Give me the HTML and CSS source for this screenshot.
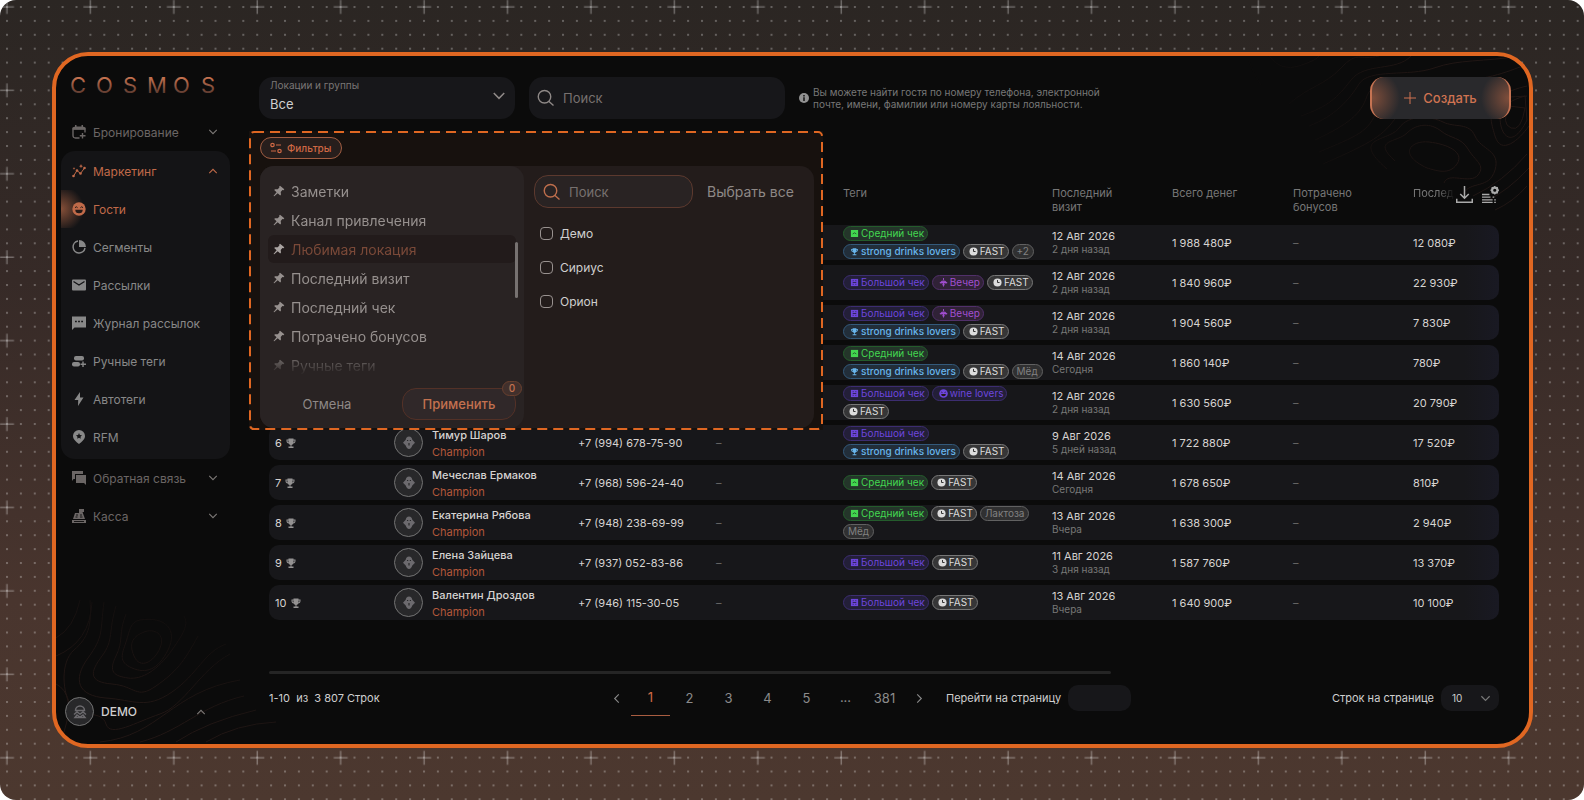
FILE: index.html
```html
<!DOCTYPE html>
<html lang="ru">

<head>
	<meta charset="utf-8">
	<title>COSMOS</title>
	<meta name="viewport" content="width=device-width, initial-scale=1">
	<link rel="stylesheet" href="styles.css">
</head>

<body>
	<!-- icon sprite -->
	<svg class="sprite" aria-hidden="true">
		<symbol id="i-down" viewBox="0 0 12 12"><path d="M1.5 3.5 6 8l4.500-4.500" fill="none" stroke="currentColor" stroke-width="1.300"/></symbol>
		<symbol id="i-up" viewBox="0 0 12 12"><path d="M1.500 8.500 6 4l4.500 4.500" fill="none" stroke="currentColor" stroke-width="1.300"/></symbol>
		<symbol id="i-search" viewBox="0 0 18 18"><path d="M7.500 1.500a6 6 0 1 1 0 12.500a6.200 6.200 0 1 1 0-12.500zM12 12.500l4.500 4" fill="none" stroke="currentColor" stroke-width="1.400"/></symbol>
		<symbol id="i-pin" viewBox="0 0 12 12"><path d="M7 .8 11.300 4.300 10.500 5.200 9.400 5 7.700 7 8 9.500 7.200 10.400 4.700 8.200 1.300 11.300.500 11 3.600 7.200 1.200 5 2 4.200 4.700 4.200 6.400 2.500 6.200 1.500z" fill="currentColor"/></symbol>
		<symbol id="i-cup" viewBox="0 0 24 24"><path d="M19 5h-2V3H7v2H3v3c0 2.550 1.920 4.630 4.390 4.940.630 1.500 1.980 2.630 3.610 2.960V19H7v3h10v-3h-4v-3.100c1.630-.330 2.980-1.460 3.610-2.960C19.080 12.630 21 10.550 21 8V5zM5 8V7h2v3.820C5.840 10.400 5 9.300 5 8zm14 0c0 1.300-.840 2.400-2 2.820V7h2z" fill="currentColor"/></symbol>
		<symbol id="i-clock" viewBox="0 0 10 10"><circle cx="5" cy="5" r="4.500" fill="currentColor"/><path d="M5 2.200V5h2.300" fill="none" stroke="#333" stroke-width="1.100"/></symbol>
		<symbol id="i-check" viewBox="0 0 10 10"><path d="M1 1h8v8H1z" fill="currentColor"/><path d="M3 5.500q2-2.500 4 0" fill="none" stroke="#1d4a24" stroke-width=".9"/></symbol>
		<symbol id="i-big" viewBox="0 0 10 10"><path d="M1 1h8v8H1z" fill="currentColor"/><path d="M3 3h1M6 3h1M3 5h4M3 7h1M6 7h1" stroke="#2a2148" stroke-width="1"/></symbol>
		<symbol id="i-lamp" viewBox="0 0 10 10"><path d="M5 0v2.500M1 5.500h8L7 3.500H3zM5 5v4.500M3.500 7.500h3" fill="currentColor" stroke="currentColor" stroke-width="1"/></symbol>
		<symbol id="i-smile" viewBox="0 0 14 14"><circle cx="7" cy="7" r="6.700" fill="currentColor"/><path d="M3 5.700q1.300-1.800 2.600 0M8.400 5.700q1.300-1.800 2.600 0" fill="none" stroke="#241a18" stroke-width="1"/><path d="M3.300 7.800h7.400a3.700 3.500 0 0 1-7.400 0z" fill="#241a18"/></symbol>
		<symbol id="i-face" viewBox="0 0 16 16"><path d="M8 1.500c2 0 3 1.300 3.300 3.200l2.700 3-2.700 2.800C10.500 12.500 9.500 14 8 14s-2.500-1.500-3.300-3.500L2 7.700l2.700-3C5 2.800 6 1.500 8 1.500z" fill="currentColor"/><path d="M6 5.500h1.200M8.800 5.500H10M8 8v2.500" stroke="#28282a" stroke-width="1.200"/></symbol>
		<symbol id="i-chevl" viewBox="0 0 12 12"><path d="M8.500 1.500 4 6l4.500 4.500" fill="none" stroke="currentColor" stroke-width="1.200"/></symbol>
		<symbol id="i-chevr" viewBox="0 0 12 12"><path d="M3.500 1.500 8 6l-4.500 4.500" fill="none" stroke="currentColor" stroke-width="1.200"/></symbol>
	</svg>

	<div class="stage">
		<svg class="stage__grid" viewBox="0 0 1584 800" preserveAspectRatio="xMidYMid slice" aria-hidden="true">
			<defs>
				<pattern id="dots" x="6" y="6" width="13.900" height="13.900" patternUnits="userSpaceOnUse">
					<rect width="2" height="2" fill="#fff" opacity=".27"/>
				</pattern>
				<pattern id="crosses" x="-35" y="-35" width="83.430" height="83.430" patternUnits="userSpaceOnUse">
					<path d="M35 42h14M42 35v14" stroke="#fff" stroke-width="1.500" opacity=".3"/>
				</pattern>
			</defs>
			<rect width="1584" height="800" fill="url(#dots)"/>
			<rect width="1584" height="800" fill="url(#crosses)"/>
		</svg>

		<div class="frame">
			<!-- topographic lines in two corners -->
			<svg class="contour contour--top" viewBox="0 0 290 160" fill="none" aria-hidden="true">
				<g stroke="#211715">
					<path d="M30 0q12 16 30 10T80 0M10 5q5 15 12 24M50 48C70 30 85 30 102 12S120 5 140 0M62 60C90 50 98 42 112 24s45-8 60-24" />
					<path d="M70 70C96 60 110 44 120 28s50-7 75-16 50-6 86-12M76 84c34-16 46-26 52-44s44-18 80-16 60-8 78-15" />
					<path d="M80 96c38-16 50-20 58-42M84 108c50-22 60-28 74-48s70-16 130-20" />
					<path d="M148 113C110 80 150 86 160 72s32-12 44-6 26 0 32 14 26 14 20 34-24 10-32 24" />
					<path d="M156 105c-24-22 2-18 12-28s24-10 34-2 20 6 27 18 18 16 10 26-30-4-34 8" />
					<path d="M188 112c-30-14-16-28 2-26s36 10 28 22-22 6-30 4z" />
					<path d="M286 40c-28 8-26 20-24 30s12 22 26-6zM288 30c-44 10-38 30-32 50s24 4 34-10M270 50q-8 18 2 22t14-20z" />
					<path d="M234 140q30-14 54-42M246 146q24-12 44-34M256 154q18-8 32-24" />
				</g>
			</svg>
			<svg class="contour contour--bottom" viewBox="0 0 240 150" fill="none" aria-hidden="true">
				<g stroke="#211715">
					<path d="M88 38c10-4 22 2 16 16s-20 22-26 8 0-20 10-24z"/>
					<path d="M84 26c26-4 38 10 28 30S90 80 76 74 66 60 70 48s4-20 14-22z"/>
					<path d="M70 20c-8 20-2 26-10 42s-2 20 12 22 30-8 44-28 16-26 12-34"/>
					<path d="M60 12c-8 26-2 34-14 50s-14 26 10 28 24 16 44 2 28-24 42-50"/>
					<path d="M48 8c-4 30 0 34-16 56s-10 38 18 40 40 12 66-6 32-40 54-48"/>
					<path d="M34 6c2 26-2 38-16 50S6 100 16 112s30 4 34 18 30-2 54-10 40-44 70-60"/>
					<path d="M0 44q18-10 24-38M0 62q34-14 36-54M0 90q20 10 8 48M44 148c60-6 70-50 140-62M84 148c40-10 60-36 104-46M120 148q30-20 80-32M150 148q30-18 70-20"/>
				</g>
			</svg>

			<aside class="sidebar">
				<svg class="logo" viewBox="0 0 146 18" role="img" aria-label="COSMOS">
					<defs>
						<linearGradient id="copper" x1="0" y1="0" x2="0" y2="1">
							<stop offset=".2" stop-color="#c77350"/>
							<stop offset="1" stop-color="#402b27"/>
						</linearGradient>
					</defs>
					<text x="-1 25 52 76 102 130" y="17" fill="url(#copper)">COSMOS</text>
				</svg>

				<nav class="nav">
					<button class="nav__item nav__item--top" type="button">
						<svg viewBox="0 0 14 14"><path d="M7.500 13H3.500Q1 13 1 10.500V4h12v3.500M10.500 8v5.500M7.800 10.700h5.700" fill="none" stroke="currentColor" stroke-width="1.400"/><path d="M.500 4.500v-2L3 1.500h8l2.500 1v2zM3 0h1.500v2H3zM9.500 0H11v2H9.500z" fill="currentColor"/></svg>
						<span>Бронирование</span>
						<svg class="nav__arrow"><use href="#i-down"/></svg>
					</button>
					<div class="nav__group">
						<button class="nav__item nav__item--on" type="button">
							<svg viewBox="0 0 14 14" fill="currentColor"><path d="M1.500 12 5 6.500l3.500 3L12.500 4" fill="none" stroke="currentColor"/><circle cx="1.500" cy="12" r="1.300"/><circle cx="5" cy="6.500" r="1.300"/><circle cx="8.500" cy="9.500" r="1.300"/><circle cx="12.500" cy="4" r="1.300"/><path d="m9 0 .6 1.600L11 2.200l-1.400.6L9 4.200l-.6-1.400L7 2.200l1.400-.6zM2 3l.4 1 1 .4-1 .4L2 6l-.4-1.200-1-.4 1-.4z"/></svg>
							<span>Маркетинг</span>
							<svg class="nav__arrow"><use href="#i-up"/></svg>
						</button>
						<a class="nav__item nav__item--on nav__item--current" href="#guests">
							<svg><use href="#i-smile"/></svg>
							<span>Гости</span>
						</a>
						<a class="nav__item" href="#segments">
							<svg viewBox="0 0 14 14"><path d="M6 1a6 6 0 1 0 7 7" fill="none" stroke="currentColor" stroke-width="1.500"/><path d="M7 0a7 7 0 0 1 7 7H7z" fill="currentColor"/></svg>
							<span>Сегменты</span>
						</a>
						<a class="nav__item" href="#mailings">
							<svg viewBox="0 0 14 14"><rect y="1.500" width="14" height="11" rx="1" fill="currentColor"/><path d="m1.500 3.500 5.500 3.500 5.500-3.500" fill="none" stroke="#151517" stroke-width="1.300"/></svg>
							<span>Рассылки</span>
						</a>
						<a class="nav__item" href="#log">
							<svg viewBox="0 0 14 14"><path d="M0 .5h14v11H2.500L0 14z" fill="currentColor"/><path d="M3 5.500h1.800M6.100 5.500h1.800M9.200 5.500H11" stroke="#151517" stroke-width="1.600"/></svg>
							<span>Журнал рассылок</span>
						</a>
						<a class="nav__item" href="#tags">
							<svg viewBox="0 0 14 14"><rect x="2" y="2" width="10" height="4.500" rx="2" fill="currentColor"/><rect y="8" width="8" height="4.500" rx="2" fill="currentColor"/><path d="M11 7.500V13M8.500 10.200h5.500" stroke="currentColor" stroke-width="1.400"/></svg>
							<span>Ручные теги</span>
						</a>
						<a class="nav__item" href="#autotags">
							<svg viewBox="0 0 14 14"><path d="M8 0 2.500 8h3.700L6 14l5.500-8.500H8z" fill="currentColor"/></svg>
							<span>Автотеги</span>
						</a>
						<a class="nav__item" href="#rfm">
							<svg viewBox="0 0 14 14"><path d="M7 0a6 6 0 0 1 6 6c0 3.500-3.500 6-6 8-2.500-2-6-4.500-6-8a6 6 0 0 1 6-6z" fill="currentColor"/><path d="m7 3 .9 1.900 2.100.3-1.500 1.500.3 2.100L7 7.800l-1.800 1 .3-2.100L4 5.200l2.100-.3z" fill="#151517"/></svg>
							<span>RFM</span>
						</a>
					</div>
					<button class="nav__item nav__item--top" type="button">
						<svg viewBox="0 0 14 14" fill="currentColor"><path d="M0 0h11v3H3v5H1.500L0 10z"/><path d="M4 4h10v10l-2-2H4z"/></svg>
						<span>Обратная связь</span>
						<svg class="nav__arrow"><use href="#i-down"/></svg>
					</button>
					<button class="nav__item nav__item--top" type="button">
						<svg viewBox="0 0 14 14"><path d="M7 0h5v3h-1.500l2.500 7H1l2-6h4V2.500H7zM0 11h14v3H0z" fill="currentColor"/><path d="M4 6h2M8 6h2M3.500 8h2M8 8h2.500M2 12.500h10" stroke="#0b0b0b" stroke-width=".9"/></svg>
						<span>Касса</span>
						<svg class="nav__arrow"><use href="#i-down"/></svg>
					</button>
				</nav>

				<button class="user" type="button">
					<span class="avatar"><svg viewBox="0 0 16 16" fill="none" stroke="currentColor" stroke-width="1.500"><path d="M3.500 6.500a4.500 4.500 0 0 1 9 0zM2 10.500 5 8l3 2 3-2 3 2.500M3 13.500l2-2.500 3 2 3-2 2 2.500z"/></svg></span>
					<span class="user__name">DEMO</span>
					<svg class="nav__arrow"><use href="#i-up"/></svg>
				</button>
			</aside>

			<main class="main">
				<header class="topbar">
					<div class="field field--select">
						<label for="location">Локации и группы</label>
						<select id="location"><option>Все</option></select>
						<svg><use href="#i-down"/></svg>
					</div>
					<div class="field field--search">
						<svg><use href="#i-search"/></svg>
						<input type="text" placeholder="Поиск" aria-label="Поиск">
					</div>
					<div class="hint">
						<svg viewBox="0 0 10 10"><circle cx="5" cy="5" r="5" fill="currentColor"/><path d="M5 2v1.500M5 4.300V8" stroke="#0b0b0b" stroke-width="1.400"/></svg>
						<p>Вы можете найти гостя по номеру телефона, электронной<br>почте, имени, фамилии или номеру карты лояльности.</p>
					</div>
					<button class="create" type="button">
						<svg viewBox="0 0 12 12"><path d="M6 0v12M0 6h12" stroke="currentColor"/></svg>
						<span>Создать</span>
					</button>
				</header>

				<section class="filters">
					<svg class="filters__outline" aria-hidden="true"><rect x="1" y="1" rx="4"/></svg>
					<button class="chip" type="button">
						<svg viewBox="0 0 12 12" fill="none" stroke="currentColor" stroke-width="1.200"><circle cx="2.500" cy="3" r="1.700"/><circle cx="9.500" cy="9" r="1.700"/><path d="M6 3h5M1 9h5"/></svg>
						Фильтры
					</button>
					<div class="popup">
						<div class="popup__left">
							<ul class="picks">
								<li><button type="button"><svg><use href="#i-pin"/></svg>Заметки</button></li>
								<li><button type="button"><svg><use href="#i-pin"/></svg>Канал привлечения</button></li>
								<li><button class="is-on" type="button"><svg><use href="#i-pin"/></svg>Любимая локация</button></li>
								<li><button type="button"><svg><use href="#i-pin"/></svg>Последний визит</button></li>
								<li><button type="button"><svg><use href="#i-pin"/></svg>Последний чек</button></li>
								<li><button type="button"><svg><use href="#i-pin"/></svg>Потрачено бонусов</button></li>
								<li><button type="button"><svg><use href="#i-pin"/></svg>Ручные теги</button></li>
							</ul>
							<div class="popup__thumb"></div>
							<div class="popup__actions">
								<button class="cancel" type="button">Отмена</button>
								<button class="apply" type="button">Применить<span class="apply__badge">0</span></button>
							</div>
						</div>
						<div class="popup__right">
							<div class="popup__head">
								<div class="field field--small">
									<svg><use href="#i-search"/></svg>
									<input type="text" placeholder="Поиск" aria-label="Поиск локации">
								</div>
								<button class="all" type="button">Выбрать все</button>
							</div>
							<label class="check"><input type="checkbox">Демо</label>
							<label class="check"><input type="checkbox">Сириус</label>
							<label class="check"><input type="checkbox">Орион</label>
						</div>
					</div>
				</section>

				<div class="content">
					<table class="guests">
						<colgroup>
							<col class="c-rank"><col class="c-avatar"><col class="c-name"><col class="c-phone"><col class="c-card"><col class="c-tags"><col class="c-visit"><col class="c-total"><col class="c-bonus"><col>
						</colgroup>
						<thead>
							<tr>
								<td colspan="5"></td>
								<th>Теги</th>
								<th>Последний<br>визит</th>
								<th>Всего денег</th>
								<th>Потрачено<br>бонусов</th>
								<th>
									<div class="tools">
										<span class="tools__label">Послед</span>
										<button type="button" aria-label="Скачать"><svg viewBox="0 0 16 16" fill="none" stroke="currentColor" stroke-width="1.400"><path d="M8 0v11.500M4 7.500l4 4 4-4M.700 12v3.200h14.600V12"/></svg></button>
										<button type="button" aria-label="Настроить столбцы"><svg viewBox="0 0 16 16" fill="none" stroke="currentColor"><path d="M0 8h7M0 10.500h8M0 13h10M0 15.500h10M10 10.500h1.500M11.500 13H13M11.500 15.500H13" stroke-width="1.200"/><circle cx="12" cy="4" r="2.500" stroke-width="2"/><path d="M12 0v8M8 4h8M9.200 1.200l5.600 5.600M14.800 1.200 9.200 6.800" stroke-width="1.200" stroke-dasharray="1.200 5.500"/></svg></button>
									</div>
								</th>
							</tr>
						</thead>
						<tbody>
							<tr>
								<td colspan="5"></td>
								<td><div class="tags"><span class="tag tag--green"><svg><use href="#i-check"/></svg>Средний чек</span><span class="tag tag--blue"><svg><use href="#i-cup"/></svg>strong drinks lovers</span><span class="tag tag--fast"><svg><use href="#i-clock"/></svg>FAST</span><span class="tag tag--plain">+2</span></div></td>
								<td>12 Авг 2026<small>2 дня назад</small></td>
								<td>1 988 480₽</td>
								<td class="none">–</td>
								<td>12 080₽</td>
							</tr>
							<tr>
								<td colspan="5"></td>
								<td><div class="tags"><span class="tag tag--violet"><svg><use href="#i-big"/></svg>Большой чек</span><span class="tag tag--purple"><svg><use href="#i-lamp"/></svg>Вечер</span><span class="tag tag--fast"><svg><use href="#i-clock"/></svg>FAST</span></div></td>
								<td>12 Авг 2026<small>2 дня назад</small></td>
								<td>1 840 960₽</td>
								<td class="none">–</td>
								<td>22 930₽</td>
							</tr>
							<tr>
								<td colspan="5"></td>
								<td><div class="tags"><span class="tag tag--violet"><svg><use href="#i-big"/></svg>Большой чек</span><span class="tag tag--purple"><svg><use href="#i-lamp"/></svg>Вечер</span><span class="tag tag--blue"><svg><use href="#i-cup"/></svg>strong drinks lovers</span><span class="tag tag--fast"><svg><use href="#i-clock"/></svg>FAST</span></div></td>
								<td>12 Авг 2026<small>2 дня назад</small></td>
								<td>1 904 560₽</td>
								<td class="none">–</td>
								<td>7 830₽</td>
							</tr>
							<tr>
								<td colspan="5"></td>
								<td><div class="tags"><span class="tag tag--green"><svg><use href="#i-check"/></svg>Средний чек</span><span class="tag tag--blue"><svg><use href="#i-cup"/></svg>strong drinks lovers</span><span class="tag tag--fast"><svg><use href="#i-clock"/></svg>FAST</span><span class="tag tag--plain">Мёд</span></div></td>
								<td>14 Авг 2026<small>Сегодня</small></td>
								<td>1 860 140₽</td>
								<td class="none">–</td>
								<td>780₽</td>
							</tr>
							<tr>
								<td colspan="5"></td>
								<td><div class="tags"><span class="tag tag--violet"><svg><use href="#i-big"/></svg>Большой чек</span><span class="tag tag--violet"><svg><use href="#i-smile"/></svg>wine lovers</span><span class="tag tag--fast"><svg><use href="#i-clock"/></svg>FAST</span></div></td>
								<td>12 Авг 2026<small>2 дня назад</small></td>
								<td>1 630 560₽</td>
								<td class="none">–</td>
								<td>20 790₽</td>
							</tr>
							<tr>
								<td class="rank">6 <svg><use href="#i-cup"/></svg></td>
								<td><span class="avatar"><svg><use href="#i-face"/></svg></span></td>
								<td class="name">Тимур Шаров<small>Champion</small></td>
								<td>+7 (994) 678-75-90</td>
								<td class="none">–</td>
								<td><div class="tags"><span class="tag tag--violet"><svg><use href="#i-big"/></svg>Большой чек</span><span class="tag tag--blue"><svg><use href="#i-cup"/></svg>strong drinks lovers</span><span class="tag tag--fast"><svg><use href="#i-clock"/></svg>FAST</span></div></td>
								<td>9 Авг 2026<small>5 дней назад</small></td>
								<td>1 722 880₽</td>
								<td class="none">–</td>
								<td>17 520₽</td>
							</tr>
							<tr>
								<td class="rank">7 <svg><use href="#i-cup"/></svg></td>
								<td><span class="avatar"><svg><use href="#i-face"/></svg></span></td>
								<td class="name">Мечеслав Ермаков<small>Champion</small></td>
								<td>+7 (968) 596-24-40</td>
								<td class="none">–</td>
								<td><div class="tags"><span class="tag tag--green"><svg><use href="#i-check"/></svg>Средний чек</span><span class="tag tag--fast"><svg><use href="#i-clock"/></svg>FAST</span></div></td>
								<td>14 Авг 2026<small>Сегодня</small></td>
								<td>1 678 650₽</td>
								<td class="none">–</td>
								<td>810₽</td>
							</tr>
							<tr>
								<td class="rank">8 <svg><use href="#i-cup"/></svg></td>
								<td><span class="avatar"><svg><use href="#i-face"/></svg></span></td>
								<td class="name">Екатерина Рябова<small>Champion</small></td>
								<td>+7 (948) 238-69-99</td>
								<td class="none">–</td>
								<td><div class="tags"><span class="tag tag--green"><svg><use href="#i-check"/></svg>Средний чек</span><span class="tag tag--fast"><svg><use href="#i-clock"/></svg>FAST</span><span class="tag tag--plain">Лактоза</span><span class="tag tag--plain">Мёд</span></div></td>
								<td>13 Авг 2026<small>Вчера</small></td>
								<td>1 638 300₽</td>
								<td class="none">–</td>
								<td>2 940₽</td>
							</tr>
							<tr>
								<td class="rank">9 <svg><use href="#i-cup"/></svg></td>
								<td><span class="avatar"><svg><use href="#i-face"/></svg></span></td>
								<td class="name">Елена Зайцева<small>Champion</small></td>
								<td>+7 (937) 052-83-86</td>
								<td class="none">–</td>
								<td><div class="tags"><span class="tag tag--violet"><svg><use href="#i-big"/></svg>Большой чек</span><span class="tag tag--fast"><svg><use href="#i-clock"/></svg>FAST</span></div></td>
								<td>11 Авг 2026<small>3 дня назад</small></td>
								<td>1 587 760₽</td>
								<td class="none">–</td>
								<td>13 370₽</td>
							</tr>
							<tr>
								<td class="rank">10 <svg><use href="#i-cup"/></svg></td>
								<td><span class="avatar"><svg><use href="#i-face"/></svg></span></td>
								<td class="name">Валентин Дроздов<small>Champion</small></td>
								<td>+7 (946) 115-30-05</td>
								<td class="none">–</td>
								<td><div class="tags"><span class="tag tag--violet"><svg><use href="#i-big"/></svg>Большой чек</span><span class="tag tag--fast"><svg><use href="#i-clock"/></svg>FAST</span></div></td>
								<td>13 Авг 2026<small>Вчера</small></td>
								<td>1 640 900₽</td>
								<td class="none">–</td>
								<td>10 100₽</td>
							</tr>
						</tbody>
					</table>

					<div class="hscroll"></div>

					<footer class="pager">
						<p class="pager__count">1-10 &nbsp;из &nbsp;3 807 Строк</p>
						<div class="pager__pages">
							<button class="pager__step" type="button" aria-label="Назад"><svg><use href="#i-chevl"/></svg></button>
							<button class="is-on" type="button">1</button>
							<button type="button">2</button>
							<button type="button">3</button>
							<button type="button">4</button>
							<button type="button">5</button>
							<span>...</span>
							<button type="button">381</button>
							<button class="pager__step" type="button" aria-label="Вперёд"><svg><use href="#i-chevr"/></svg></button>
						</div>
						<label for="goto">Перейти на страницу</label>
						<input id="goto" class="pager__box pager__box--input" type="text">
						<label class="pager__rows" for="rows">Строк на странице</label>
						<div class="pager__box">
							<select id="rows"><option>10</option></select>
							<svg><use href="#i-down"/></svg>
						</div>
					</footer>
				</div>
			</main>
		</div>
	</div>
</body>

</html>
```

FILE: styles.css
```css
* {
	box-sizing: border-box;
}

html,
body {
	margin: 0;
	padding: 0;
	background: #fff;
	font-family: Inter, 'Noto Sans', sans-serif;
	font-size: 12px;
	color: #cfcfcf;
}

p,
ul {
	margin: 0;
	padding: 0;
	list-style: none;
}

button,
input,
select {
	margin: 0;
	padding: 0;
	border: 0;
	background: none;
	color: inherit;
	font: inherit;
	appearance: none;
	outline: none;
}

input::placeholder {
	color: #77716f;
	opacity: 1;
}

a {
	color: inherit;
	text-decoration: none;
}

svg {
	display: block;
	flex: none;
}

.sprite {
	position: absolute;
	width: 0;
	height: 0;
}

/* backdrop */

.stage {
	position: relative;
	min-height: 100vh;
	padding: 52px 51px 52px 52px;
	border-radius: 16px;
	overflow: hidden;
	background: linear-gradient(#2b2623, #362a27 35%, #49352e 75%, #4c382f);
}

.stage__grid {
	position: absolute;
	top: 0;
	left: 0;
	width: 100%;
	height: 100%;
}

.frame {
	position: relative;
	display: flex;
	min-height: calc(100vh - 104px);
	border: 4px solid #e06722;
	border-radius: 36px;
	background: #0b0b0b;
	overflow: hidden;
}

.contour {
	position: absolute;
}

.contour--top {
	top: 0;
	right: 0;
	width: 290px;
	height: 160px;
	mask-image: linear-gradient(250deg, #000 30%, transparent 85%);
}

.contour--bottom {
	bottom: 0;
	left: 0;
	width: 240px;
	height: 150px;
	mask-image: linear-gradient(20deg, #000 30%, transparent 90%);
}

/* sidebar */

.sidebar {
	position: relative;
	display: flex;
	flex-direction: column;
	flex: none;
	width: 174px;
	padding: 20px 0 18px 5px;
}

.logo {
	width: 146px;
	height: 18px;
	margin-left: 10px;
	overflow: visible;
	font-size: 22px;
	font-weight: 400;
}

.nav {
	margin-top: 19px;
}

.nav__group {
	padding: 1px 0 3px;
	border-radius: 14px;
	background: #141416;
	overflow: hidden;
}

.nav__item {
	display: flex;
	align-items: center;
	gap: 7px;
	width: 100%;
	height: 38px;
	padding: 0 12px 0 11px;
	color: #888;
	text-align: left;
}

.nav__item span {
	flex: 1;
}

.nav__item svg {
	width: 14px;
	height: 14px;
}

.nav__item--top {
	color: #6b6665;
}

.nav__item--on {
	color: #c06a49;
}

.nav__item--current {
	background: radial-gradient(circle at 0 50%, #864f38, transparent 23px);
}

.nav__item .nav__arrow,
.nav__arrow {
	width: 10px;
	height: 10px;
	color: #7d7977;
}

.nav__item--on .nav__arrow {
	color: inherit;
}

.user {
	display: flex;
	align-items: center;
	gap: 7px;
	margin-top: auto;
	padding: 0 24px 0 4px;
	text-align: left;
}

.user__name {
	flex: 1;
	font-weight: 500;
}

.avatar {
	display: flex;
	align-items: center;
	justify-content: center;
	width: 29px;
	height: 29px;
	border: 1px solid #737373;
	border-radius: 50%;
	background: #28282a;
	color: #6c6a6e;
}

.avatar svg {
	width: 16px;
	height: 16px;
}

/* top bar */

.main {
	position: relative;
	flex: 1;
	min-width: 0;
	padding: 21px 18px 0 29px;
}

.topbar {
	display: flex;
	align-items: center;
	gap: 14px;
}

.field {
	display: flex;
	align-items: center;
	flex: none;
	gap: 8px;
	width: 256px;
	height: 42px;
	padding: 0 8px;
	border-radius: 14px;
	background: #17171a;
}

.field svg {
	width: 18px;
	height: 18px;
	color: #8e8886;
}

.field input {
	flex: 1;
	min-width: 0;
	font-size: 13px;
}

.field--select {
	display: grid;
	grid-template: 16px 22px / 1fr 14px;
	gap: 0;
	padding: 0 9px 4px 11px;
}

.field--select label {
	font-size: 10px;
	line-height: 16px;
	color: #7a7675;
}

.field--select select {
	grid-row: 2;
	font-size: 13px;
	line-height: 20px;
}

.field--select svg {
	grid-column: 2;
	grid-row: 1 / 3;
	align-self: center;
	width: 14px;
	height: 14px;
}

.hint {
	display: flex;
	align-items: center;
	gap: 4px;
	font-size: 10px;
	line-height: 12px;
	color: #777;
}

.hint svg {
	width: 10px;
	height: 10px;
	color: #929292;
}

.create {
	display: flex;
	align-items: center;
	justify-content: center;
	gap: 7px;
	width: 141px;
	height: 42px;
	margin-left: auto;
	border: solid #c67352;
	border-width: 0 2px;
	border-radius: 14px;
	background: radial-gradient(circle at 0 50%, #7f4e3b, transparent 28px), radial-gradient(circle at 100% 50%, #7f4e3b, transparent 28px), #29292c;
	color: #cf7351;
	font-size: 13px;
	font-weight: 500;
}

.create svg {
	width: 12px;
	height: 12px;
}

/* filters popup, lies over the table */

.filters {
	position: absolute;
	z-index: 1;
	top: 75px;
	left: 19px;
	width: 574px;
	padding: 6px 9px 2px 11px;
	background: #17110e;
}

.filters__outline {
	position: absolute;
	top: 0;
	left: 0;
	width: 100%;
	height: 100%;
}

.filters__outline rect {
	width: calc(100% - 2px);
	height: calc(100% - 2px);
	fill: none;
	stroke: #e06722;
	stroke-width: 2px;
	stroke-dasharray: 10 6;
}

.chip {
	position: relative;
	display: flex;
	align-items: center;
	gap: 5px;
	height: 22px;
	padding: 0 10px 0 9px;
	border: 1px solid #a15d42;
	border-radius: 11px;
	background: #271e1c;
	color: #cf6844;
	font-size: 10px;
	font-weight: 500;
}

.chip svg {
	width: 12px;
	height: 12px;
}

.popup {
	display: flex;
	margin-top: 7px;
	border-radius: 14px;
	background: #231c1b;
}

.popup__left {
	position: relative;
	width: 264px;
	padding: 11px 8px 8px;
	border-radius: 14px;
	background: #292323;
}

.picks {
	height: 203px;
	overflow: hidden;
	mask-image: linear-gradient(#000 172px, transparent 198px);
}

.picks li {
	height: 29px;
}

.picks button {
	display: flex;
	align-items: center;
	gap: 6px;
	width: 100%;
	height: 28px;
	padding: 0 5px;
	border-radius: 6px;
	color: #96908e;
	font-size: 14px;
}

.picks svg {
	width: 12px;
	height: 12px;
}

.picks .is-on {
	background: #221b1b;
	color: #7a4938;
}

.picks .is-on svg {
	color: #aaa4a2;
}

.popup__thumb {
	position: absolute;
	top: 76px;
	right: 6px;
	width: 3px;
	height: 56px;
	border-radius: 2px;
	background: #777271;
}

.popup__actions {
	display: grid;
	grid-template-columns: 1fr 114px;
	gap: 16px;
	margin-top: 8px;
}

.cancel,
.apply {
	height: 32px;
	font-size: 13px;
}

.cancel {
	color: #8e8886;
}

.apply {
	position: relative;
	border: 1px solid #533127;
	border-radius: 14px;
	background: #302829;
	color: #c3714f;
	font-weight: 500;
}

.apply__badge {
	position: absolute;
	top: -8px;
	right: -7px;
	width: 20px;
	height: 15px;
	border: 1px solid #69402f;
	border-radius: 8px;
	background: #41302c;
	font-size: 10px;
	line-height: 13px;
}

.popup__right {
	flex: 1;
	padding: 9px 16px 0 10px;
}

.popup__head {
	display: flex;
	align-items: center;
	gap: 14px;
	margin-bottom: 15px;
}

.field--small {
	width: 159px;
	height: 33px;
	border: 1px solid #5c392e;
	background: #292323;
}

.field--small svg {
	color: #be6e4c;
}

.all {
	color: #8e8886;
	font-size: 14px;
	white-space: nowrap;
}

.check {
	display: flex;
	align-items: center;
	gap: 7px;
	height: 20px;
	margin: 0 0 14px 6px;
}

.check input {
	width: 13px;
	height: 13px;
	border: 1px solid #98918f;
	border-radius: 4px;
}

/* guests table */

.content {
	padding: 0 12px 0 10px;
}

.guests {
	width: 100%;
	margin-top: 62px;
	border-spacing: 0 5px;
	table-layout: fixed;
	line-height: 14px;
}

.c-rank { width: 125px; }
.c-avatar { width: 38px; }
.c-name { width: 146px; }
.c-phone { width: 138px; }
.c-card { width: 127px; }
.c-tags { width: 209px; }
.c-visit { width: 120px; }
.c-total { width: 121px; }
.c-bonus { width: 120px; }

.guests th,
.guests td {
	padding: 0;
	text-align: left;
	white-space: nowrap;
}

.guests th {
	height: 34px;
	color: #777;
	font-size: 11px;
	font-weight: 400;
	vertical-align: top;
}

.guests tbody td {
	height: 35px;
	background: #17171a;
	color: #d6d3d1;
	font-size: 11px;
}

.guests tbody td:first-child {
	border-radius: 10px 0 0 10px;
}

.guests tbody td:last-child {
	border-radius: 0 10px 10px 0;
	background: linear-gradient(90deg, #17171a 60%, #191923);
}

.guests small {
	display: block;
	font-size: 10px;
	line-height: 13px;
	color: #777;
}

.guests .name {
	font-weight: 500;
	line-height: 18px;
}

.guests .name small {
	color: #b4573b;
	font-size: 11px;
	font-weight: 400;
	line-height: 16px;
}

.guests .none {
	color: #666;
}

.guests .rank {
	padding-left: 6px;
}

.rank svg {
	display: inline-block;
	width: 12px;
	height: 12px;
	color: #949292;
	vertical-align: -2px;
}

.tools {
	display: flex;
	gap: 9px;
}

.tools button {
	width: 17px;
	height: 17px;
	color: #aaa;
}

.tools__label {
	flex: 1;
	min-width: 42px;
	margin-right: -8px;
	mask-image: linear-gradient(90deg, #000 60%, transparent);
}

.tags {
	display: flex;
	flex-wrap: wrap;
	gap: 3px;
	width: 201px;
}

.tag {
	display: flex;
	align-items: center;
	gap: 2px;
	height: 15px;
	padding: 0 3px 0 6px;
	border: 1px solid;
	border-radius: 8px;
	font-size: 10px;
	line-height: 13px;
}

.tag svg {
	width: 9px;
	height: 9px;
}

.tag--green {
	border-color: #245c2c;
	background: #24352a;
	color: #43d750;
}

.tag--blue {
	border-color: #33597a;
	background: #222e3a;
	color: #68b5ec;
	font-weight: 500;
}

.tag--violet {
	border-color: #3c2d70;
	background: #231f38;
	color: #6d46dc;
}

.tag--purple {
	border-color: #51306a;
	background: #302237;
	color: #a14fd0;
}

.tag--fast {
	padding: 0 3px 0 5px;
	border-color: #777;
	background: #363637;
	color: #dcdcdc;
}

.tag--plain {
	padding: 0 4px;
	border-color: #616161;
	background: #303031;
	color: #818181;
}

/* bottom of the page */

.hscroll {
	width: 842px;
	max-width: 100%;
	height: 3px;
	margin-top: 46px;
	border-radius: 2px;
	background: #252525;
}

.pager {
	display: flex;
	align-items: center;
	margin-top: 6px;
	font-size: 11px;
}

.pager__count {
	width: 332px;
}

.pager__pages {
	display: flex;
	align-items: center;
	flex: none;
	margin-right: 12px;
	color: #8b8b8b;
	font-size: 13px;
	text-align: center;
}

.pager__pages button,
.pager__pages span {
	width: 39px;
	height: 36px;
	line-height: 35px;
}

.pager__pages .is-on {
	border-bottom: 1px solid #a95d41;
	color: #d16b45;
}

.pager__pages .pager__step {
	display: flex;
	align-items: center;
	justify-content: center;
	width: 30px;
}

.pager svg {
	width: 11px;
	height: 11px;
}

.pager__box {
	display: flex;
	align-items: center;
	width: 58px;
	height: 26px;
	margin-left: 7px;
	padding: 0 8px 0 11px;
	border-radius: 10px;
	background: #17171a;
}

.pager__box--input {
	width: 63px;
}

.pager__box select {
	flex: 1;
	min-width: 0;
	font-size: 10px;
}

.pager__box svg {
	color: #777;
}

.pager__rows {
	margin-left: auto;
}
```
